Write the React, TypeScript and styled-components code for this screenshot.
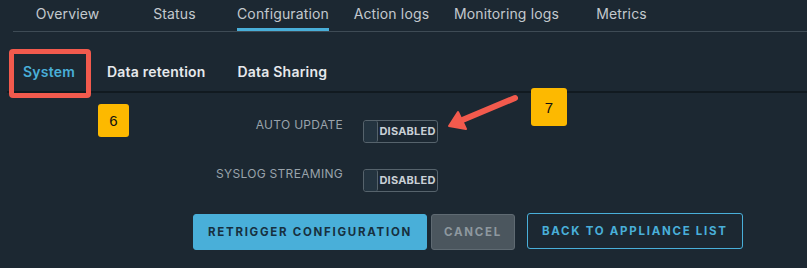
import styled, { createGlobalStyle } from 'styled-components';

const GlobalStyle = createGlobalStyle`
  html, body {
    margin: 0;
    padding: 0;
    background: #1c2832;
  }
  body {
    font-family: Inter, "Noto Sans", sans-serif;
  }
`;

const Page = styled.div`
  position: relative;
  width: 807px;
  height: 268px;
  overflow: hidden;
  background: #1c2832;
`;

const TabBar = styled.nav`
  display: flex;
  margin-left: 13px;
  padding-left: 1px;
  border-bottom: 1px solid #3e4b55;
`;

const Tab = styled.div`
  min-width: 107px;
  padding: 0 9px;
  box-sizing: border-box;
  display: flex;
  justify-content: center;
`;

const TabLabel = styled.span<{ active?: boolean }>`
  height: 28px;
  line-height: 28px;
  font-size: 14px;
  letter-spacing: 0.01em;
  color: #c3c9ce;
  border-bottom: 3px solid ${(p) => (p.active ? '#49afd9' : 'transparent')};
`;

const SubNav = styled.div`
  display: flex;
  margin: 20px 0 0 7px;
  border-bottom: 2px solid #111a20;
`;

const SubTab = styled.div<{ active?: boolean }>`
  height: 39px;
  line-height: 39px;
  padding: 0 16px;
  font-size: 14px;
  font-weight: 600;
  letter-spacing: 0.015em;
  color: ${(p) => (p.active ? '#49afd9' : '#e6e9ec')};
`;

const Form = styled.div`
  display: grid;
  grid-template-columns: 343px auto;
  column-gap: 20px;
  row-gap: 26px;
  margin-top: 27px;
  justify-content: start;
`;

const FieldLabel = styled.div`
  text-align: right;
  font-size: 12px;
  line-height: 14px;
  margin-top: -2px;
  letter-spacing: 0.025em;
  color: #99a3ab;
`;

const Toggle = styled.div`
  display: flex;
  width: 75px;
  height: 23px;
  box-sizing: border-box;
  border: 1px solid #56636c;
  border-radius: 3px;
  overflow: hidden;
`;

const Knob = styled.div`
  width: 13px;
  height: 100%;
  background: #243440;
  border-right: 1px solid #56636c;
  border-radius: 2px;
`;

const ToggleText = styled.span`
  flex: 1;
  text-align: center;
  font-size: 11px;
  font-weight: 700;
  letter-spacing: 0.02em;
  line-height: 21px;
  color: #c9d0d5;
`;

const Actions = styled.div`
  display: flex;
  align-items: flex-start;
  margin: 22px 0 0 193px;
`;

const Button = styled.button<{ variant: 'primary' | 'disabled' | 'outline' }>`
  height: 36px;
  box-sizing: border-box;
  padding: 0 ${(p) => (p.variant === 'disabled' ? '12px' : '14px')};
  border-radius: 3px;
  font-family: Inter, "Noto Sans", sans-serif;
  font-size: 11.5px;
  font-weight: 700;
  letter-spacing: 0.15em;
  cursor: pointer;
  margin-right: ${(p) => (p.variant === 'disabled' ? '12px' : '4px')};
  margin-top: ${(p) => (p.variant === 'outline' ? '-1px' : '0')};
  background: ${(p) =>
    p.variant === 'primary' ? '#49afd9' : p.variant === 'disabled' ? '#4b565e' : 'transparent'};
  color: ${(p) =>
    p.variant === 'primary' ? '#17303f' : p.variant === 'disabled' ? '#8e989f' : '#49afd9'};
  border: 1px solid
    ${(p) =>
      p.variant === 'primary' ? '#49afd9' : p.variant === 'disabled' ? '#5f6a72' : '#49afd9'};
`;

const Highlight = styled.div`
  position: absolute;
  left: 9px;
  top: 49px;
  width: 82px;
  height: 49px;
  box-sizing: border-box;
  border: 5px solid #f25a4d;
  border-radius: 4px;
`;

const Badge = styled.div<{ x: number; y: number; w: number; h: number }>`
  position: absolute;
  left: ${(p) => p.x}px;
  top: ${(p) => p.y}px;
  width: ${(p) => p.w}px;
  height: ${(p) => p.h}px;
  background: #fdb900;
  border-radius: 3px;
  display: flex;
  align-items: center;
  justify-content: center;
  font-family: "Liberation Sans", Arial, sans-serif;
  font-size: 15px;
  color: #111;
`;

const Overlay = styled.svg`
  position: absolute;
  left: 0;
  top: 0;
  pointer-events: none;
`;

const tabs = ['Overview', 'Status', 'Configuration', 'Action logs', 'Monitoring logs', 'Metrics'];
const subTabs = ['System', 'Data retention', 'Data Sharing'];
const fields = ['AUTO UPDATE', 'SYSLOG STREAMING'];

export default function App() {
  return (
    <>
      <GlobalStyle />
      <Page>
        <TabBar>
          {tabs.map((t) => (
            <Tab key={t}>
              <TabLabel active={t === 'Configuration'}>{t}</TabLabel>
            </Tab>
          ))}
        </TabBar>
        <SubNav>
          {subTabs.map((t) => (
            <SubTab key={t} active={t === 'System'}>
              {t}
            </SubTab>
          ))}
        </SubNav>
        <Form>
          {fields.map((f) => (
            <>
              <FieldLabel key={f}>{f}</FieldLabel>
              <Toggle key={f + '-t'}>
                <Knob />
                <ToggleText>DISABLED</ToggleText>
              </Toggle>
            </>
          ))}
        </Form>
        <Actions>
          <Button variant="primary">RETRIGGER CONFIGURATION</Button>
          <Button variant="disabled">CANCEL</Button>
          <Button variant="outline">BACK TO APPLIANCE LIST</Button>
        </Actions>

        <Highlight />
        <Badge x={98} y={104} w={31} h={33}>6</Badge>
        <Badge x={531} y={88} w={36} h={38}>7</Badge>
        <Overlay width={807} height={268} viewBox="0 0 807 268">
          <line x1={515} y1={98} x2={460} y2={121} stroke="#f25a4d" strokeWidth={6} strokeLinecap="round" />
          <polygon points="449,126 458,112 466,129" fill="#f25a4d" stroke="#f25a4d" strokeWidth={2} strokeLinejoin="round" />
        </Overlay>
      </Page>
    </>
  );
}
